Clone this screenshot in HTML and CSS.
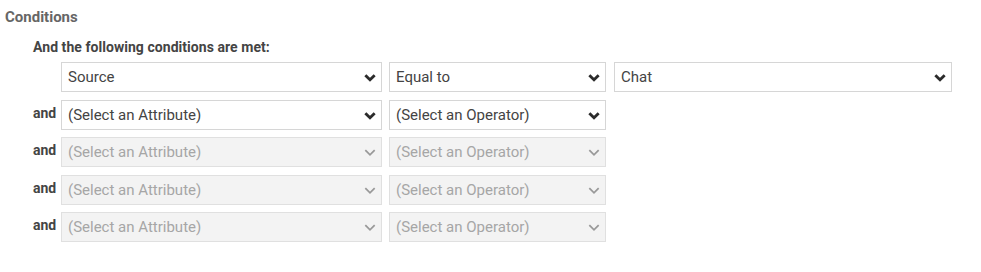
FILE: index.html
```html
<!DOCTYPE html>
<html>
<head>
<meta charset="utf-8">
<link rel="stylesheet" href="styles.css">
</head>
<body>
<div class="section">
  <div class="title">Conditions</div>
  <div class="block">
    <div class="subtitle">And the following conditions are met:</div>
    <div class="rows">
      <div class="row">
        <span class="join"></span>
        <div class="sel attr"><span>Source</span><svg class="chev" viewBox="0 0 10 6"><path d="M1 1l4 4 4-4"/></svg></div>
        <div class="sel op"><span>Equal to</span><svg class="chev" viewBox="0 0 10 6"><path d="M1 1l4 4 4-4"/></svg></div>
        <div class="sel val"><span>Chat</span><svg class="chev" viewBox="0 0 10 6"><path d="M1 1l4 4 4-4"/></svg></div>
      </div>
      <div class="row">
        <span class="join">and</span>
        <div class="sel attr"><span>(Select an Attribute)</span><svg class="chev" viewBox="0 0 10 6"><path d="M1 1l4 4 4-4"/></svg></div>
        <div class="sel op"><span>(Select an Operator)</span><svg class="chev" viewBox="0 0 10 6"><path d="M1 1l4 4 4-4"/></svg></div>
      </div>
      <div class="row">
        <span class="join">and</span>
        <div class="sel attr disabled"><span>(Select an Attribute)</span><svg class="chev" viewBox="0 0 10 6"><path d="M1 1l4 4 4-4"/></svg></div>
        <div class="sel op disabled"><span>(Select an Operator)</span><svg class="chev" viewBox="0 0 10 6"><path d="M1 1l4 4 4-4"/></svg></div>
      </div>
      <div class="row">
        <span class="join">and</span>
        <div class="sel attr disabled"><span>(Select an Attribute)</span><svg class="chev" viewBox="0 0 10 6"><path d="M1 1l4 4 4-4"/></svg></div>
        <div class="sel op disabled"><span>(Select an Operator)</span><svg class="chev" viewBox="0 0 10 6"><path d="M1 1l4 4 4-4"/></svg></div>
      </div>
      <div class="row">
        <span class="join">and</span>
        <div class="sel attr disabled"><span>(Select an Attribute)</span><svg class="chev" viewBox="0 0 10 6"><path d="M1 1l4 4 4-4"/></svg></div>
        <div class="sel op disabled"><span>(Select an Operator)</span><svg class="chev" viewBox="0 0 10 6"><path d="M1 1l4 4 4-4"/></svg></div>
      </div>
    </div>
  </div>
</div>
</body>
</html>
```
FILE: styles.css
```css
html, body {
  margin: 0;
  padding: 0;
  background: #fff;
}
body {
  font-family: Roboto, "Liberation Sans", Arial, sans-serif;
  color: #444;
}
.section {
  padding: 8px 0 0 5px;
}
.title {
  font-size: 15px;
  font-weight: 700;
  color: #666;
  line-height: 18px;
}
.block {
  padding-left: 28px;
  padding-top: 12px;
}
.subtitle {
  font-size: 14px;
  font-weight: 700;
  color: #444;
  line-height: 18px;
  letter-spacing: 0.05px;
}
.rows {
  margin-top: 6px;
  display: flex;
  flex-direction: column;
  gap: 7.5px;
}
.row {
  display: flex;
  align-items: flex-start;
  gap: 7px;
}
.join {
  width: 21px;
  white-space: nowrap;
  font-size: 14px;
  font-weight: 700;
  color: #444;
  line-height: 27px;
}
.sel {
  box-sizing: border-box;
  height: 30px;
  border: 1px solid #d6d6d6;
  background: #fff;
  display: flex;
  align-items: center;
  justify-content: space-between;
  padding: 0 5px 0 6px;
  font-size: 15px;
  color: #444;
}
.sel.attr { width: 321px; }
.sel.op { width: 217px; margin-left: 0; }
.sel.val { width: 338px; margin-left: 1px; }
.chev {
  width: 12px;
  height: 7px;
  margin-top: 1px;
  fill: none;
  stroke: #2b2b2b;
  stroke-width: 2.4;
  overflow: visible;
}
.sel.disabled {
  background: #f3f3f3;
  border-color: #e0e0e0;
  color: #a6a6a6;
}
.sel.disabled .chev {
  stroke: #999;
  stroke-width: 1.5;
}
```
